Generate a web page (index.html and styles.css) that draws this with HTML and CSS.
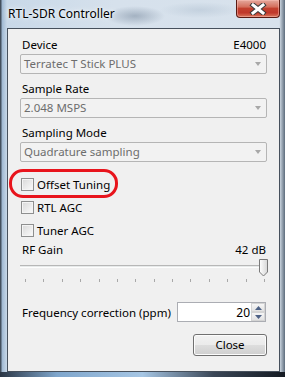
FILE: index.html
```html
<!DOCTYPE html>
<html lang="en">
<head>
    <meta charset="UTF-8">
    <title>RTL-SDR Controller</title>
    <link rel="stylesheet" href="styles.css">
</head>
<body>
    <div class="window">
        <div class="titlebar">
            <span class="title">RTL-SDR Controller</span>
            <div class="close-x">
                <svg width="18" height="12" viewBox="0 0 18 12">
                    <path d="M4 2 L14 10 M14 2 L4 10" stroke="#3b3b3b" stroke-width="5" stroke-linecap="square"/>
                    <path d="M4 2 L14 10 M14 2 L4 10" stroke="#ffffff" stroke-width="3" stroke-linecap="square"/>
                </svg>
            </div>
        </div>
        <div class="client">
            <div class="label-row">
                <span>Device</span>
                <span>E4000</span>
            </div>
            <div class="combo">Terratec T Stick PLUS<span class="arrow"></span></div>

            <div class="label-row gap">
                <span>Sample Rate</span>
            </div>
            <div class="combo">2.048 MSPS<span class="arrow"></span></div>

            <div class="label-row gap">
                <span>Sampling Mode</span>
            </div>
            <div class="combo">Quadrature sampling<span class="arrow"></span></div>

            <div class="check-row first"><span class="box"></span>Offset Tuning</div>
            <div class="check-row"><span class="box"></span>RTL AGC</div>
            <div class="check-row"><span class="box"></span>Tuner AGC</div>

            <div class="label-row rf">
                <span>RF Gain</span>
                <span>42 dB</span>
            </div>
            <div class="slider">
                <div class="track"></div>
                <svg class="thumb" width="11" height="18" viewBox="0 0 11 18">
                    <defs>
                        <linearGradient id="tg" x1="0" y1="0" x2="1" y2="0">
                            <stop offset="0" stop-color="#ffffff"/>
                            <stop offset="1" stop-color="#d6d6d6"/>
                        </linearGradient>
                    </defs>
                    <path d="M1.5 0.5 H9.5 V13 L5.5 17 L1.5 13 Z" fill="url(#tg)" stroke="#7a7a7a"/>
                </svg>
                <div class="ticks">
                    <i></i><i></i><i></i><i></i><i></i><i></i><i></i>
                    <i></i><i></i><i></i><i></i><i></i><i></i><i></i>
                </div>
            </div>

            <div class="freq-row">
                <span>Frequency correction (ppm)</span>
                <div class="spinner">
                    <span class="value">20</span>
                    <div class="spin">
                        <div class="spin-btn"><svg width="7" height="4" viewBox="0 0 7 4"><path d="M0 4 L3.5 0 L7 4 Z" fill="#4d6185"/></svg></div>
                        <div class="spin-btn"><svg width="7" height="4" viewBox="0 0 7 4"><path d="M0 0 L3.5 4 L7 0 Z" fill="#4d6185"/></svg></div>
                    </div>
                </div>
            </div>

            <div class="button-row">
                <button class="btn">Close</button>
            </div>

            <div class="highlight"></div>
        </div>
    </div>
</body>
</html>
```

FILE: styles.css
```css
body {
    margin: 0;
    font-family: 'Noto Sans', 'Open Sans', sans-serif;
    font-size: 11.5px;
    color: #000;
    white-space: nowrap;
}

.window {
    width: 285px;
    height: 377px;
    box-sizing: border-box;
    padding: 0 5px 5px 7px;
    display: flex;
    flex-direction: column;
    background:
        radial-gradient(ellipse 30px 10px at 135px 16px, rgba(70, 90, 115, 0.35), transparent),
        radial-gradient(ellipse 40px 8px at 200px 10px, rgba(150, 170, 190, 0.3), transparent),
        linear-gradient(to right, #44505e 0, #44505e 1px, #9fb8d2 2px, #c8d8e8 7px, #d6e1ec 40%, #d8e2ec 98%, #5d6c7c 100%);
    position: relative;
}

.window::after {
    content: "";
    position: absolute;
    left: 0;
    right: 0;
    bottom: 0;
    height: 5px;
    background: linear-gradient(to right, #2a3544, #7fa6cc 20%, #a6c6e4 50%, #3a4656 75%, #141a22);
}

.titlebar {
    height: 28px;
    display: flex;
    justify-content: space-between;
    align-items: flex-start;
}

.title {
    margin-left: 1px;
    margin-top: 6px;
    line-height: 15px;
    font-size: 12px;
    text-shadow: 0 0 6px #eef3f8, 0 0 3px #ffffff;
}

.close-x {
    width: 44px;
    height: 18px;
    box-sizing: border-box;
    border: 1px solid #5a1a12;
    border-top: none;
    border-radius: 0 0 4px 4px;
    background: linear-gradient(to bottom, #e4a89c 0, #d4705e 40%, #c2402e 50%, #c0382a 75%, #d9775c 100%);
    box-shadow: inset 0 0 0 1px rgba(255, 200, 190, 0.45);
    display: flex;
    align-items: center;
    justify-content: center;
}

.client {
    flex: 1;
    position: relative;
    background: #f0f0f0;
    border: 1px solid #46505c;
    padding: 8px 12px 0 12px;
    display: flex;
    flex-direction: column;
}

.label-row {
    display: flex;
    justify-content: space-between;
    line-height: 15px;
    height: 15px;
    padding: 0 1px 0 2px;
}

.label-row.gap {
    margin-top: 7px;
}

.label-row.rf {
    margin-top: 3px;
}

.combo {
    margin-top: 2px;
    height: 20px;
    box-sizing: border-box;
    border: 1px solid #b5b5b5;
    border-radius: 2px;
    background: #f2f2f2;
    color: #6d6d6d;
    line-height: 18px;
    padding-left: 3px;
    display: flex;
    justify-content: space-between;
    align-items: center;
}

.arrow {
    width: 0;
    height: 0;
    border-left: 3.5px solid transparent;
    border-right: 3.5px solid transparent;
    border-top: 4px solid #a8a8a8;
    margin-right: 5px;
}

.check-row {
    display: flex;
    align-items: center;
    height: 17px;
    line-height: 15px;
    margin-top: 6px;
    padding-left: 1px;
}

.check-row.first {
    margin-top: 14px;
}

.box {
    width: 13px;
    height: 13px;
    box-sizing: border-box;
    border: 1px solid #8e8f8f;
    background: linear-gradient(135deg, #d8d8d8, #fbfbfb);
    box-shadow: inset 0 0 0 1px #f4f4f4;
    margin-right: 3px;
}

.slider {
    position: relative;
    height: 28px;
    margin-top: 0;
}

.track {
    position: absolute;
    left: 0;
    right: 0;
    top: 8px;
    background: #e7eaea;
    border-top: 1px solid #b7b7b7;
    border-bottom: 1px solid #fdfdfd;
    box-sizing: border-box;
    height: 3px;
}

.thumb {
    position: absolute;
    right: -2px;
    top: 2px;
}

.ticks {
    position: absolute;
    left: 5px;
    right: 2px;
    top: 22px;
    display: flex;
    justify-content: space-between;
}

.ticks i {
    width: 1px;
    height: 3px;
    background: #a8a8a8;
}

.freq-row {
    margin-top: 17px;
    display: flex;
    justify-content: space-between;
    align-items: center;
    padding-left: 2px;
}

.spinner {
    width: 89px;
    height: 20px;
    box-sizing: border-box;
    border: 1px solid #abadb3;
    background: #fff;
    display: flex;
    justify-content: flex-end;
    align-items: center;
    margin-right: 1px;
}

.value {
    line-height: 15px;
    font-size: 12px;
    margin-right: 1px;
}

.spin {
    width: 14px;
    height: 18px;
    display: flex;
    flex-direction: column;
}

.spin-btn {
    flex: 1;
    box-sizing: border-box;
    border: 1px solid #d4d4d4;
    background: linear-gradient(to bottom, #f6f6f6, #e2e2e2);
    display: flex;
    align-items: center;
    justify-content: center;
}

.button-row {
    display: flex;
    justify-content: flex-end;
    margin-top: 12px;
}

.btn {
    width: 74px;
    height: 22px;
    font-family: 'Noto Sans', 'Open Sans', sans-serif;
    font-size: 11.5px;
    color: #000;
    border: 1px solid #707070;
    border-radius: 3px;
    background: linear-gradient(to bottom, #f2f2f2 0, #ebebeb 50%, #dddddd 51%, #cfcfcf 100%);
    box-shadow: inset 0 0 0 1px #fcfcfc;
    padding: 0;
    line-height: 18px;
}

.highlight {
    position: absolute;
    left: 1px;
    top: 140px;
    width: 109px;
    height: 29px;
    box-sizing: border-box;
    border: 3px solid #e8141c;
    border-radius: 14px;
}
```
